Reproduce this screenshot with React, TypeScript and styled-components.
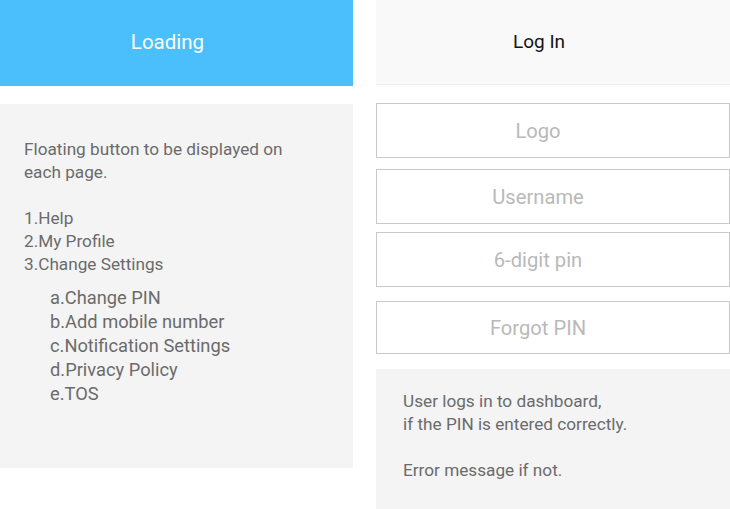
import React from 'react'
import styled, { createGlobalStyle } from 'styled-components'

const GlobalStyle = createGlobalStyle`
  html, body {
    margin: 0;
    padding: 0;
    background: #ffffff;
    font-family: Roboto, 'Liberation Sans', sans-serif;
  }
`

const Page = styled.div`
  display: grid;
  grid-template-columns: 353px 354px;
  column-gap: 23px;
  width: 730px;
  height: 509px;
  overflow: hidden;
`

const Column = styled.div`
  display: flex;
  flex-direction: column;
`

const Header = styled.div<{ primary?: boolean }>`
  height: ${({ primary }) => (primary ? '86px' : '85px')};
  display: flex;
  align-items: center;
  justify-content: center;
  font-size: ${({ primary }) => (primary ? '20.5px' : '19px')};
  color: ${({ primary }) => (primary ? '#ffffff' : '#141414')};
  background: ${({ primary }) => (primary ? '#4bbefc' : '#f9f9f9')};
  border-bottom: ${({ primary }) => (primary ? 'none' : '1px solid #eeeeee')};
  padding: 0 ${({ primary }) => (primary ? '18px' : '28px')} 2px 0;
  box-sizing: border-box;
`

const NotePanel = styled.div`
  margin-top: 18px;
  height: 364px;
  background: #f4f4f4;
  padding: 34px 24px 0;
  box-sizing: border-box;
  color: #6b6b6b;
  font-size: 17.2px;
  line-height: 23px;
`

const Para = styled.p`
  margin: 0 0 23px;
`

const Line = styled.div`
  white-space: nowrap;
`

const SubList = styled.div`
  margin-top: 10px;
  padding-left: 26px;
  font-size: 18.3px;
  line-height: 24px;
`

const Field = styled.div<{ gap: number; h: number }>`
  margin-top: ${({ gap }) => gap}px;
  height: ${({ h }) => h}px;
  border: 1px solid #c9c9c9;
  box-sizing: border-box;
  padding-right: 30px;
  display: flex;
  align-items: center;
  justify-content: center;
  color: #b9b9b9;
  font-size: 20.2px;
`

const InfoPanel = styled.div`
  margin-top: 15px;
  height: 141px;
  background: #f4f4f4;
  padding: 21px 27px 0;
  box-sizing: border-box;
  color: #6b6b6b;
  font-size: 17.2px;
  line-height: 23px;
`

export default function App() {
  return (
    <>
      <GlobalStyle />
      <Page>
        <Column>
          <Header primary>Loading</Header>
          <NotePanel>
            <Para>
              Floating button to be displayed on
              <br />
              each page.
            </Para>
            <Line>1.Help</Line>
            <Line>2.My Profile</Line>
            <Line>3.Change Settings</Line>
            <SubList>
              <Line>a.Change PIN</Line>
              <Line>b.Add mobile number</Line>
              <Line>c.Notification Settings</Line>
              <Line>d.Privacy Policy</Line>
              <Line>e.TOS</Line>
            </SubList>
          </NotePanel>
        </Column>
        <Column>
          <Header>Log In</Header>
          <Field gap={18} h={55}>Logo</Field>
          <Field gap={11} h={55}>Username</Field>
          <Field gap={8} h={55}>6-digit pin</Field>
          <Field gap={14} h={53}>Forgot PIN</Field>
          <InfoPanel>
            <Para>
              User logs in to dashboard,
              <br />
              if the PIN is entered correctly.
            </Para>
            <Line>Error message if not.</Line>
          </InfoPanel>
        </Column>
      </Page>
    </>
  )
}
